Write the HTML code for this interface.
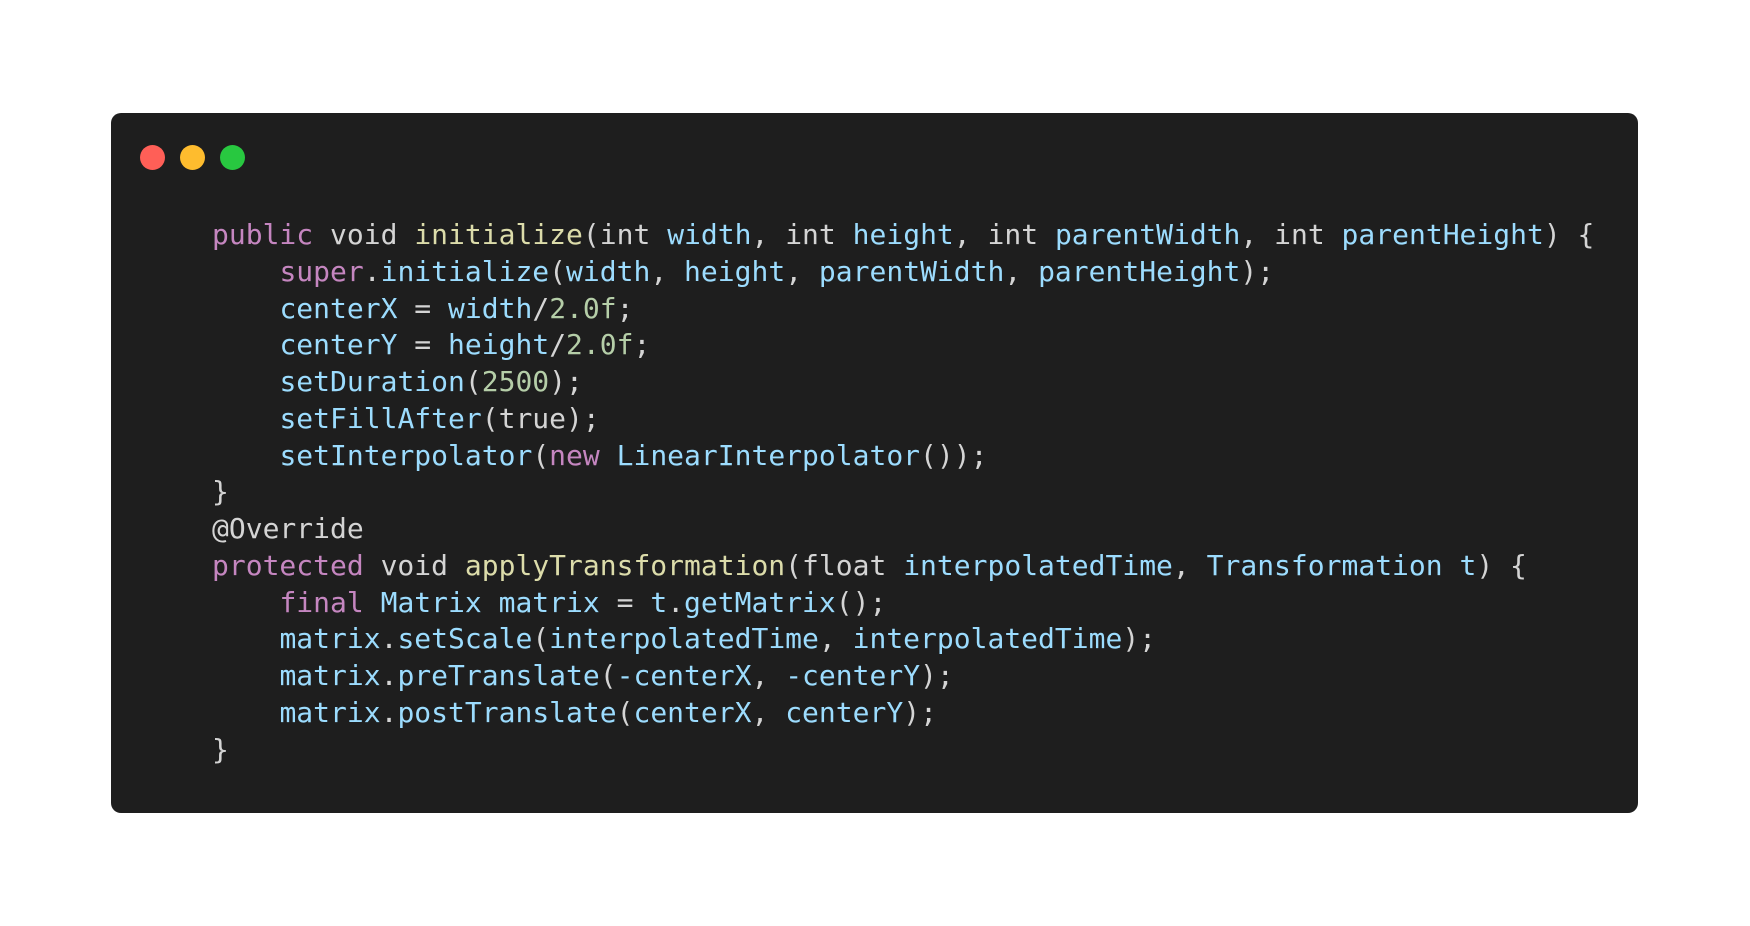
<!DOCTYPE html>
<html><head><style>
html,body{margin:0;padding:0;background:#fff;width:1750px;height:926px;overflow:hidden}
.card{position:absolute;left:111px;top:113px;width:1527px;height:700px;background:#1e1e1e;border-radius:10px}
.dot{position:absolute;top:145px;width:25px;height:25px;border-radius:50%}
pre{position:absolute;left:212px;top:217px;margin:0;font-family:"DejaVu Sans Mono","Liberation Mono",monospace;font-size:28px;line-height:36.75px;color:#d4d4d4}
.k{color:#c586c0}.f{color:#dcdcaa}.v{color:#9cdcfe}.n{color:#b5cea8}
</style></head><body>
<div class="card"></div>
<div class="dot" style="left:140px;background:#ff5f57"></div>
<div class="dot" style="left:180px;background:#febc2e"></div>
<div class="dot" style="left:220px;background:#28c840"></div>
<pre><span class="k">public</span> void <span class="f">initialize</span>(int <span class="v">width</span>, int <span class="v">height</span>, int <span class="v">parentWidth</span>, int <span class="v">parentHeight</span>) {
    <span class="k">super</span>.<span class="v">initialize</span>(<span class="v">width</span>, <span class="v">height</span>, <span class="v">parentWidth</span>, <span class="v">parentHeight</span>);
    <span class="v">centerX</span> = <span class="v">width</span>/<span class="n">2.0f</span>;
    <span class="v">centerY</span> = <span class="v">height</span>/<span class="n">2.0f</span>;
    <span class="v">setDuration</span>(<span class="n">2500</span>);
    <span class="v">setFillAfter</span>(true);
    <span class="v">setInterpolator</span>(<span class="k">new</span> <span class="v">LinearInterpolator</span>());
}
@Override
<span class="k">protected</span> void <span class="f">applyTransformation</span>(float <span class="v">interpolatedTime</span>, <span class="v">Transformation t</span>) {
    <span class="k">final</span> <span class="v">Matrix matrix</span> = <span class="v">t</span>.<span class="v">getMatrix</span>();
    <span class="v">matrix</span>.<span class="v">setScale</span>(<span class="v">interpolatedTime</span>, <span class="v">interpolatedTime</span>);
    <span class="v">matrix</span>.<span class="v">preTranslate</span>(<span class="v">-centerX</span>, <span class="v">-centerY</span>);
    <span class="v">matrix</span>.<span class="v">postTranslate</span>(<span class="v">centerX</span>, <span class="v">centerY</span>);
}</pre>
</body></html>
